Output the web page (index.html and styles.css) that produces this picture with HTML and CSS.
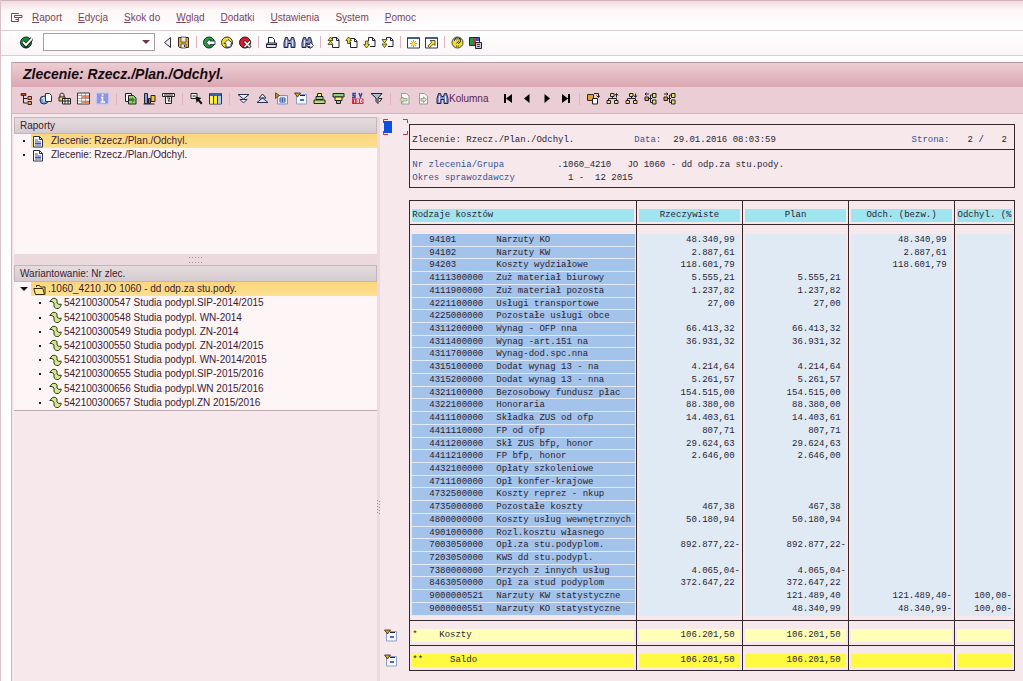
FILE: index.html
```html
<!DOCTYPE html>
<html lang="pl">
<head>
    <meta charset="UTF-8">
    <meta name="viewport" content="width=device-width, initial-scale=1.0">
    <title>Zlecenie: Rzecz./Plan./Odchyl.</title>
    <link rel="stylesheet" href="styles.css">
</head>
<body>
    <!-- icon sprite -->
    <svg class="sprite" aria-hidden="true">
        <symbol id="i-menu" viewBox="0 0 13 13"><path d="M8.500 2V1.500h-7v8H6M4.500 3.500H12v2H9M4.500 3.500v2H8.500v2H5.500M8.500 7.500v2H6" fill="none" stroke="#7a4358"/></symbol>
        <symbol id="i-ok" viewBox="0 0 13 13"><circle cx="6" cy="6.500" r="5.500" fill="#1c8a34" stroke="#123"/><path d="M3 6l3 3.500L12 2.500" fill="none" stroke="#111" stroke-width="3.500"/><path d="M3 6l3 3L12 2.500" fill="none" stroke="#fff" stroke-width="2"/></symbol>
        <symbol id="i-left" viewBox="0 0 9 13"><path d="M7.500 1.500v10L1.500 6.500z" fill="#f4e6ea" stroke="#334"/></symbol>
        <symbol id="i-save" viewBox="0 0 13 13"><path d="M1.500 1.500h10v10h-9l-1-1z" fill="#e0b23a" stroke="#3a2c1c"/><path d="M4 1h5v5H4zM4 8h5v4H4z" fill="#efe6f2" stroke="#3a2c1c" stroke-width=".7"/><path d="M7 9h1v2H7z" fill="#333"/></symbol>
        <symbol id="i-back" viewBox="0 0 13 13"><circle cx="6" cy="6.500" r="5.500" fill="#2c9a40" stroke="#132"/><path d="M3 6.500L7 3V5h5v3.500H7v1.800z" fill="#fff" stroke="#123" stroke-width=".8"/></symbol>
        <symbol id="i-exit" viewBox="0 0 13 13"><circle cx="6" cy="6.500" r="5.500" fill="#f5dd2c" stroke="#332"/><path d="M7 3.500L3 7.500h2v3.500h5V7.500h2z" fill="#fff" stroke="#223" stroke-width=".8"/></symbol>
        <symbol id="i-cancel" viewBox="0 0 13 13"><circle cx="6" cy="6.500" r="5.500" fill="#d41f30" stroke="#311"/><path d="M5 5l6.500 6.500M11.500 5L5 11.500" stroke="#222" stroke-width="3"/><path d="M5.500 5.500l5.500 5.500M11 5.500L5.500 11" stroke="#fff" stroke-width="1.600"/></symbol>
        <symbol id="i-print" viewBox="0 0 13 13"><path d="M3.500 7.500v-6h4l2 2v4" fill="#fff" stroke="#223"/><path d="M1.500 8l1-1h9l-.5 4.500H1.500z" fill="#e6e2e8" stroke="#223"/><path d="M1 8.500h11" stroke="#223"/></symbol>
        <symbol id="i-find" viewBox="0 0 13 13"><path d="M2.500 1.500h2l1 3h2l1-3h2l1.500 5v5h-4V7.500h-3v4h-4v-5z" fill="#8793c9" stroke="#1d2444"/><path d="M3.500 4v6M9.500 4v6" stroke="#dfe5ff"/></symbol>
        <symbol id="i-findnext" viewBox="0 0 13 13"><path d="M2.500 1.500h2l1 3h1l1-3h2l1.500 5v5h-4V7.500h-2v4h-4v-5z" fill="#8793c9" stroke="#1d2444"/><path d="M3.500 4v6" stroke="#dfe5ff"/><path d="M6 8.500h3V6l3.500 3.500L9 12.500v-2H6z" fill="#fff" stroke="#1d2444" stroke-width=".8"/></symbol>
        <symbol id="i-first" viewBox="0 0 13 13"><path d="M5.500 3.500V1.500H10L12 4v7.500H5.500V9" fill="#fff" stroke="#223"/><path d="M9.500 1.500V4.500H12" fill="none" stroke="#223"/><path d="M3.500 1L6 4.500H1zM3.500 5L6 8.500H1z" fill="#f2e02a" stroke="#332" stroke-width=".8"/></symbol>
        <symbol id="i-prev" viewBox="0 0 13 13"><path d="M5.500 3V2.500H9.500L12 5v6.500H5.500V6" fill="#fff" stroke="#223"/><path d="M9.500 2.500V5.500H12" fill="none" stroke="#223"/><path d="M3.500 1L6.500 4.500H5v3H2.500v-3H.8z" fill="#f2e02a" stroke="#332" stroke-width=".8"/></symbol>
        <symbol id="i-next" viewBox="0 0 13 13"><path d="M5.500 5V1.500H9.500L12 4v6.500H7" fill="#fff" stroke="#223"/><path d="M9.500 1.500V4.500H12" fill="none" stroke="#223"/><path d="M3.500 12L.8 8.500h1.700V5H5v3.500h1.500z" fill="#f2e02a" stroke="#332" stroke-width=".8"/></symbol>
        <symbol id="i-last" viewBox="0 0 13 13"><path d="M5.500 4V1.500H9.500L12 4v6.500H7" fill="#fff" stroke="#223"/><path d="M9.500 1.500V4.500H12" fill="none" stroke="#223"/><path d="M1 3.500h5L3.500 7zM1 8h5l-2.500 3.500z" fill="#f2e02a" stroke="#332" stroke-width=".8"/></symbol>
        <symbol id="i-session" viewBox="0 0 13 13"><path d="M.5 1.500h12v10.500H.5z" fill="#fff" stroke="#2b3a55"/><path d="M1 1h11v2H1z" fill="#425e91"/><path d="M6.500 4v7M3 7.500h7M4 5l5 5M9 5l-5 5" stroke="#b99d16"/><circle cx="6.500" cy="7.500" r="1.500" fill="#ffee39"/></symbol>
        <symbol id="i-shortcut" viewBox="0 0 13 13"><path d="M.5 1.500h12v10.500H.5z" fill="#fff" stroke="#2b3a55"/><path d="M1 1h11v2H1z" fill="#425e91"/><path d="M5 4.500h5v5L8.500 8l-4 3.500L3 10l3.800-3.800z" fill="#f7e532" stroke="#332" stroke-width=".8"/></symbol>
        <symbol id="i-help" viewBox="0 0 13 13"><circle cx="6.500" cy="6.500" r="5.500" fill="#f3de2d" stroke="#443"/><path d="M4 5c0-3.500 5-3 5-.5C9 6.500 6.500 6 6.500 8M6.500 9.200v1.500" fill="none" stroke="#222" stroke-width="2.200"/><path d="M4.300 5c0-3 4.500-2.500 4.500-.5C8.800 6.300 6.500 6 6.500 8M6.500 9.300v1.200" fill="none" stroke="#fff"/></symbol>
        <symbol id="i-layout" viewBox="0 0 13 13"><path d="M.5 1.500h10v8H.5z" fill="#fff" stroke="#223"/><path d="M1 2h3v7H1z" fill="#1c9c46"/><path d="M4 2h3v7H4z" fill="#d52c42"/><path d="M7 2h3v3H7z" fill="#3c58b8"/><path d="M6.500 6.500h6v6h-6z" fill="#c9ccd8" stroke="#223"/><path d="M8 8.500h3M8 10.500h3" stroke="#334"/></symbol>
        <symbol id="i-tree" viewBox="0 0 13 13"><path d="M3.500 3v8h4M3.500 6.500h4" fill="none" stroke="#222"/><path d="M1 1.500h5v2H1z" fill="#b43b27" stroke="#311" stroke-width=".7"/><path d="M8 4.500h3.500v3H8zM8 9.500h3.500v3H8z" fill="#e9a55e" stroke="#422"/></symbol>
        <symbol id="i-world" viewBox="0 0 13 13"><circle cx="5" cy="8" r="4" fill="#6da3dc" stroke="#1d355f"/><path d="M6.500 1.500h4l2 2v6h-6z" fill="#fff" stroke="#334"/><path d="M3 7l2-2v5" fill="none" stroke="#fff"/></symbol>
        <symbol id="i-lock" viewBox="0 0 13 13"><path d="M2 5V3c0-2.500 4-2.500 4 0v2" fill="none" stroke="#222"/><path d="M1 5h6v4H1z" fill="#f0d840" stroke="#222"/><path d="M4.500 6.500h8v5.500h-8zM4.500 9h8M7 6.500V12M10 6.500V12" fill="#fff" stroke="#222"/></symbol>
        <symbol id="i-grid" viewBox="0 0 13 13"><path d="M.5 1h12v11H.5z" fill="#fff" stroke="#3a3640"/><path d="M5 4h7v2.500H5zM5 9h7v2.500H5z" fill="#e98a5c"/><path d="M1 3.500h11M1 6.500h11M1 9h11M4.500 1v11M8.500 1v11" stroke="#8b8792" stroke-width=".7"/></symbol>
        <symbol id="i-info" viewBox="0 0 13 13"><path d="M.5 1h12v11H.5z" fill="#8d93e6" stroke="#c3c5f2"/><path d="M5 5.500h1.500v4.500M4.500 10h4.500M5.700 3h1.800" fill="none" stroke="#fff" stroke-width="1.500"/></symbol>
        <symbol id="i-export" viewBox="0 0 13 13"><path d="M1.500 1.500h6v8h-6z" fill="#fff" stroke="#222"/><path d="M4.500 3.500h5l2.500 2.500v6H4.500z" fill="#9bd36d" stroke="#222"/><path d="M5 6.500h3V5l3 3-3 3V9H5z" fill="#33842c"/></symbol>
        <symbol id="i-chart" viewBox="0 0 13 13"><path d="M1.500 1.500h3v10h-3z" fill="#8798e6" stroke="#222"/><path d="M5.500 6.500h2v5h-2z" fill="#d95d35" stroke="#222"/><path d="M8 3.500h4v6H8z" fill="#f2c43e" stroke="#222"/><path d="M.5 12h11" stroke="#222"/></symbol>
        <symbol id="i-cols" viewBox="0 0 13 13"><path d="M.5 1.500h12v3H.5z" fill="#fff" stroke="#222"/><path d="M3.500 4.500h6v7h-6z" fill="#f5f1f5" stroke="#222"/><path d="M5 6h3L6 9h2.500M2 3h9" fill="none" stroke="#222"/></symbol>
        <symbol id="i-select" viewBox="0 0 13 13"><path d="M1 1.500h6v5H1z" fill="#fff" stroke="#222"/><path d="M2.500 3h3v2h-3z" fill="#888"/><path d="M5.500 4.500l6 1.500-2 1.500 3 3.500-1.500 1.500-3-3.500-1.500 2z" fill="#111"/></symbol>
        <symbol id="i-table" viewBox="0 0 13 13"><path d="M.5 1.500h12v10.500H.5z" fill="#fff" stroke="#26324e"/><path d="M1 1h11v3H1z" fill="#3260b8"/><path d="M1 4h3v7.500H1z" fill="#fff266"/><path d="M4.500 4v8M8.500 4v8" stroke="#26324e"/><path d="M5 4h3v7.500H5z" fill="#ffe82c"/><path d="M9 4h3v7.500H9z" fill="#a8cdee"/></symbol>
        <symbol id="i-expand" viewBox="0 0 13 13"><path d="M1 2.500h11L6.500 7zM3 7.500h7L6.500 11z" fill="#e9eefb" stroke="#26324e"/></symbol>
        <symbol id="i-collapse" viewBox="0 0 13 13"><path d="M3 6l3.500-4L10 6zM1 10.500l5.500-4.500 5.500 4.500z" fill="#dce5fa" stroke="#26324e"/></symbol>
        <symbol id="i-drill" viewBox="0 0 13 13"><path d="M2.500 3.500h10v8.500h-10z" fill="#e3ecfb" stroke="#7f93bd"/><path d="M5 6h5v4H5z" fill="#fff" stroke="#3b59a8"/><path d="M7.500 6v4M5 8h5" stroke="#3b59a8"/><path d="M.5.800L4.500 3.500.5 6.500z" fill="#c98c1c" stroke="#321" stroke-width=".7"/></symbol>
        <symbol id="i-node" viewBox="0 0 13 13"><path d="M2.500 2.500h10V12h-10z" fill="#f6f8ff" stroke="#8d9fc8"/><path d="M6 3.500h5" stroke="#222"/><path d="M6 8h4" stroke="#1a3ca2" stroke-width="1.500"/><path d="M.5 1h6L3.500 5z" fill="#d8a41f" stroke="#321" stroke-width=".8"/></symbol>
        <symbol id="i-asc" viewBox="0 0 13 13"><path d="M4.500 1.500h4v3h-4z" fill="#fff266" stroke="#222"/><path d="M3 4.500h7v3H3z" fill="#8bd080" stroke="#222"/><path d="M1 8h11v3.500H1z" fill="#bfd878" stroke="#222"/></symbol>
        <symbol id="i-desc" viewBox="0 0 13 13"><path d="M1 1.500h11V5H1z" fill="#8bd080" stroke="#222"/><path d="M3 5h7v3.500H3z" fill="#fff266" stroke="#222"/><path d="M4.500 8.500h4v3h-4z" fill="#8bd080" stroke="#222"/></symbol>
        <symbol id="i-xxl" viewBox="0 0 13 13"><path d="M5 1.500H2v2h2v2H1M8 1l1.500 4L11 1" fill="none" stroke="#2343b4" stroke-width="1.400"/><path d="M1 6.500h11.500V12H1z" fill="#d62c43"/><path d="M3.500 7.500v3M6 7.500h1.500v3H6zM9.500 7.500H11v3H9.500z" fill="none" stroke="#fff" stroke-width=".8"/></symbol>
        <symbol id="i-filter" viewBox="0 0 13 13"><path d="M1 1.500h11L8 6v5.500l-2-2V6z" fill="#a9bcd0" stroke="#222"/><path d="M9 6.500h3L9.500 10" fill="none" stroke="#222"/></symbol>
        <symbol id="i-docl" viewBox="0 0 13 13"><path d="M3.500 1.500h5L11 4v8H3.500z" fill="#fbf7f8" stroke="#9b9a93"/><path d="M2 7.500L5 5v1.500h4v2.500H5v1.500z" fill="#d5e2ba" stroke="#8b9277" stroke-width=".8"/></symbol>
        <symbol id="i-docr" viewBox="0 0 13 13"><path d="M2.500 1.500h5L10.500 4v8h-8z" fill="#fbf7f8" stroke="#9b9a93"/><path d="M9.500 7.500L6.500 5v1.500H4v2.500h2.500v1.500z" fill="#d5e2ba" stroke="#8b9277" stroke-width=".8"/></symbol>
        <symbol id="n-first" viewBox="0 0 13 13"><path d="M2 2h2v9H2zM10 2v9L4 6.500z"/></symbol>
        <symbol id="n-prev" viewBox="0 0 13 13"><path d="M8.500 2v9L3 6.500z"/></symbol>
        <symbol id="n-next" viewBox="0 0 13 13"><path d="M4.500 2v9L10 6.500z"/></symbol>
        <symbol id="n-last" viewBox="0 0 13 13"><path d="M9 2h2v9H9zM3 2v9l6-4.500z"/></symbol>
        <symbol id="i-swap" viewBox="0 0 13 13"><path d="M.5 2.500h6v6h-6z" fill="#e6a028" stroke="#3a2a12"/><path d="M5.500 6.500h5v5.500h-5z" fill="#fff" stroke="#222"/><path d="M7 1.500h4.500V5M9.500 3.500l2 2 1.500-2" fill="none" stroke="#222"/></symbol>
        <symbol id="i-hier1" viewBox="0 0 13 13"><path d="M2.500 9V6.500h8V9M6.500 4v2.500" fill="none" stroke="#222"/><path d="M4.500 1.500H8v3H4.500zM1 8.500h3.500v3H1zM8.500 8.500H12v3H8.500z" fill="#f0e288" stroke="#222"/><path d="M10.500 5.500V2M9 3.500l1.500-2 1.500 2" fill="none" stroke="#222"/></symbol>
        <symbol id="i-hier2" viewBox="0 0 13 13"><path d="M2.500 9V6.500h8V9M6.500 4v2.500" fill="none" stroke="#222"/><path d="M4.500 1.500H8v3H4.500zM1 8.500h3.500v3H1zM8.500 8.500H12v3H8.500z" fill="#f0e288" stroke="#222"/><path d="M10.500 1.500V5M9 3.500l1.500 2 1.500-2" fill="none" stroke="#222"/></symbol>
        <symbol id="i-hier3" viewBox="0 0 13 13"><path d="M4 6.500h4M6.500 3v7.500H8M6.500 3H8" fill="none" stroke="#222"/><path d="M1 5h3.500v3.500H1z" fill="#e6a028" stroke="#222"/><path d="M8.500 1.500H12v4H8.500zM8.500 8H12v4H8.500z" fill="#d8e56d" stroke="#222"/><path d="M5 2H1M2.500.800L1 2l1.500 1.500" fill="none" stroke="#222"/></symbol>
        <symbol id="i-hier4" viewBox="0 0 13 13"><path d="M4 6.500h4M6.500 3v7.500H8M6.500 3H8" fill="none" stroke="#222"/><path d="M1 5h3.500v3.500H1z" fill="#e6a028" stroke="#222"/><path d="M8.500 1.500H12v4H8.500zM8.500 8H12v4H8.500z" fill="#d8e56d" stroke="#222"/><path d="M1 2h4M3.500.800L5 2 3.500 3.500" fill="none" stroke="#222"/></symbol>
        <symbol id="i-doc" viewBox="0 0 13 13"><path d="M.5 1.500h6L9.500 4.500v7.500h-9z" fill="#fff" stroke="#26324e"/><path d="M6.500 1.500v3h3" fill="none" stroke="#26324e"/><path d="M2 5h3M2 7h6M2 8.500h6M2 10h6" stroke="#3a50b0"/></symbol>
        <symbol id="i-folder" viewBox="0 0 13 13"><path d="M3.500 4V2.500h3l1 1.500h4.500v7.500" fill="#ffe58a" stroke="#332a12"/><path d="M.8 5.500h9l1.700 6H2.500z" fill="#ffe58a" stroke="#332a12"/></symbol>
        <symbol id="i-var" viewBox="0 0 13 13"><path d="M.8 4.500L3.500 1.500c2-.5 4 0 4.500 1.500v3l2 1.500 2.200-.5c0 2-1.500 4-3 4.500-2 .3-4-.5-4.200-2.500V6L3 4.500z" fill="#d5e68c" stroke="#2d3a1c"/></symbol>
    </svg>

    <nav class="menu-bar">
        <svg class="icon"><use href="#i-menu"/></svg>
        <button><u>R</u>aport</button>
        <button><u>E</u>dycja</button>
        <button><u>S</u>kok do</button>
        <button><u>W</u>gląd</button>
        <button><u>D</u>odatki</button>
        <button><u>U</u>stawienia</button>
        <button>S<u>y</u>stem</button>
        <button><u>P</u>omoc</button>
    </nav>

    <div class="system-bar">
        <button class="tool" aria-label="Enter"><svg class="icon"><use href="#i-ok"/></svg></button>
        <div class="command">
            <input type="text" aria-label="Polecenie">
            <button class="drop" aria-label="Lista poleceń"></button>
        </div>
        <button class="tool" aria-label="Zwiń"><svg class="icon narrow"><use href="#i-left"/></svg></button>
        <button class="tool" aria-label="Zapisz"><svg class="icon"><use href="#i-save"/></svg></button>
        <span class="sep"></span>
        <button class="tool" aria-label="Wstecz"><svg class="icon"><use href="#i-back"/></svg></button>
        <button class="tool" aria-label="Wyjście"><svg class="icon"><use href="#i-exit"/></svg></button>
        <button class="tool" aria-label="Anuluj"><svg class="icon"><use href="#i-cancel"/></svg></button>
        <span class="sep"></span>
        <button class="tool" aria-label="Drukuj"><svg class="icon"><use href="#i-print"/></svg></button>
        <button class="tool" aria-label="Szukaj"><svg class="icon"><use href="#i-find"/></svg></button>
        <button class="tool" aria-label="Szukaj dalej"><svg class="icon"><use href="#i-findnext"/></svg></button>
        <span class="sep"></span>
        <button class="tool" aria-label="Pierwsza strona"><svg class="icon"><use href="#i-first"/></svg></button>
        <button class="tool" aria-label="Poprzednia strona"><svg class="icon"><use href="#i-prev"/></svg></button>
        <button class="tool" aria-label="Następna strona"><svg class="icon"><use href="#i-next"/></svg></button>
        <button class="tool" aria-label="Ostatnia strona"><svg class="icon"><use href="#i-last"/></svg></button>
        <span class="sep"></span>
        <button class="tool" aria-label="Nowy tryb"><svg class="icon"><use href="#i-session"/></svg></button>
        <button class="tool" aria-label="Skrót"><svg class="icon"><use href="#i-shortcut"/></svg></button>
        <span class="sep"></span>
        <button class="tool" aria-label="Pomoc"><svg class="icon"><use href="#i-help"/></svg></button>
        <button class="tool" aria-label="Układ"><svg class="icon"><use href="#i-layout"/></svg></button>
    </div>

    <main class="window">
        <h1>Zlecenie: Rzecz./Plan./Odchyl.</h1>

        <div class="app-bar">
            <button class="tool" aria-label="Hierarchia"><svg class="icon"><use href="#i-tree"/></svg></button>
            <button class="tool" aria-label="Waluta"><svg class="icon"><use href="#i-world"/></svg></button>
            <button class="tool" aria-label="Blokada"><svg class="icon"><use href="#i-lock"/></svg></button>
            <button class="tool" aria-label="Siatka"><svg class="icon"><use href="#i-grid"/></svg></button>
            <button class="tool" aria-label="Informacja"><svg class="icon"><use href="#i-info"/></svg></button>
            <span class="sep"></span>
            <button class="tool" aria-label="Eksport"><svg class="icon"><use href="#i-export"/></svg></button>
            <button class="tool" aria-label="Wykres"><svg class="icon"><use href="#i-chart"/></svg></button>
            <button class="tool" aria-label="Format"><svg class="icon"><use href="#i-cols"/></svg></button>
            <span class="sep"></span>
            <button class="tool" aria-label="Wybierz"><svg class="icon"><use href="#i-select"/></svg></button>
            <button class="tool" aria-label="Kolumny"><svg class="icon"><use href="#i-table"/></svg></button>
            <span class="sep"></span>
            <button class="tool" aria-label="Rozwiń"><svg class="icon"><use href="#i-expand"/></svg></button>
            <button class="tool" aria-label="Zwiń"><svg class="icon"><use href="#i-collapse"/></svg></button>
            <button class="tool" aria-label="Szczegóły"><svg class="icon"><use href="#i-drill"/></svg></button>
            <button class="tool" aria-label="Węzeł"><svg class="icon"><use href="#i-node"/></svg></button>
            <button class="tool" aria-label="Sortuj rosnąco"><svg class="icon"><use href="#i-asc"/></svg></button>
            <button class="tool" aria-label="Sortuj malejąco"><svg class="icon"><use href="#i-desc"/></svg></button>
            <button class="tool" aria-label="Wyjątki"><svg class="icon"><use href="#i-xxl"/></svg></button>
            <button class="tool" aria-label="Filtr"><svg class="icon"><use href="#i-filter"/></svg></button>
            <span class="sep"></span>
            <button class="tool" aria-label="Poprzedni"><svg class="icon"><use href="#i-docl"/></svg></button>
            <button class="tool" aria-label="Następny"><svg class="icon"><use href="#i-docr"/></svg></button>
            <button class="tool labelled"><svg class="icon"><use href="#i-find"/></svg>Kolumna</button>
            <button class="tool nav-first" aria-label="Pierwsza kolumna"><svg class="icon"><use href="#n-first"/></svg></button>
            <button class="tool" aria-label="Kolumna w lewo"><svg class="icon"><use href="#n-prev"/></svg></button>
            <button class="tool" aria-label="Kolumna w prawo"><svg class="icon"><use href="#n-next"/></svg></button>
            <button class="tool" aria-label="Ostatnia kolumna"><svg class="icon"><use href="#n-last"/></svg></button>
            <span class="sep"></span>
            <button class="tool" aria-label="Zamień"><svg class="icon"><use href="#i-swap"/></svg></button>
            <button class="tool" aria-label="Poziom w górę"><svg class="icon"><use href="#i-hier1"/></svg></button>
            <button class="tool" aria-label="Poziom w dół"><svg class="icon"><use href="#i-hier2"/></svg></button>
            <button class="tool" aria-label="Węzeł w lewo"><svg class="icon"><use href="#i-hier3"/></svg></button>
            <button class="tool" aria-label="Węzeł w prawo"><svg class="icon"><use href="#i-hier4"/></svg></button>
        </div>

        <div class="panes">
            <aside class="side">
                <section class="reports">
                    <h2>Raporty</h2>
                    <ul class="list">
                        <li><i class="dot"></i><button class="selected"><svg class="icon"><use href="#i-doc"/></svg><span>Zlecenie: Rzecz./Plan./Odchyl.</span></button></li>
                        <li><i class="dot"></i><button><svg class="icon"><use href="#i-doc"/></svg><span>Zlecenie: Rzecz./Plan./Odchyl.</span></button></li>
                    </ul>
                </section>
                <div class="split-row"><svg width="16" height="8"><path d="M1 1.500h15M1 6.500h15" stroke="#a58e97" stroke-dasharray="1 2"/></svg></div>
                <section class="variants">
                    <h2>Wariantowanie: Nr zlec.</h2>
                    <ul class="list tree">
                        <li><i class="arrow"></i><button class="selected"><svg class="icon"><use href="#i-folder"/></svg>.1060_4210 JO 1060 - dd odp.za stu.pody.</button></li>
                        <li class="child"><i class="dot"></i><button><svg class="icon"><use href="#i-var"/></svg>542100300547 Studia podypl.SIP-2014/2015</button></li>
                        <li class="child"><i class="dot"></i><button><svg class="icon"><use href="#i-var"/></svg>542100300548 Studia podypl. WN-2014</button></li>
                        <li class="child"><i class="dot"></i><button><svg class="icon"><use href="#i-var"/></svg>542100300549 Studia podypl. ZN-2014</button></li>
                        <li class="child"><i class="dot"></i><button><svg class="icon"><use href="#i-var"/></svg>542100300550 Studia podypl. ZN-2014/2015</button></li>
                        <li class="child"><i class="dot"></i><button><svg class="icon"><use href="#i-var"/></svg>542100300551 Studia podypl. WN-2014/2015</button></li>
                        <li class="child"><i class="dot"></i><button><svg class="icon"><use href="#i-var"/></svg>542100300655 Studia podypl.SIP-2015/2016</button></li>
                        <li class="child"><i class="dot"></i><button><svg class="icon"><use href="#i-var"/></svg>542100300656 Studia podypl.WN 2015/2016</button></li>
                        <li class="child"><i class="dot"></i><button><svg class="icon"><use href="#i-var"/></svg>542100300657 Studia podypl.ZN 2015/2016</button></li>
                    </ul>
                </section>
            </aside>

            <div class="split-col"><svg width="3" height="16"><path d="M.5 1v15M2.500 2v14" stroke="#a58e97" stroke-dasharray="1 2"/></svg></div>

            <div class="report">
                <div class="head-row">
                    <div class="gutter"><svg width="26" height="16"><path d="M1 2h8v12H1z" fill="#0b50e0"/><path d="M5 .5H.5V4M.5 12v3.500H5M20 .5h4.500V4M24.500 12v3.500H20" fill="none" stroke="#c93345"/></svg></div>
                    <header class="head">
                        <div class="head-title">
                            <span class="name">Zlecenie: Rzecz./Plan./Odchyl.</span>
                            <span class="label date-label">Data:</span>
                            <span class="date">29.01.2016 08:03:59</span>
                            <span class="label page-label">Strona:</span>
                            <span class="page">2 /</span>
                            <span>2</span>
                        </div>
                        <dl class="head-info">
                            <dt>Nr zlecenia/Grupa</dt><dd>.1060_4210   JO 1060 - dd odp.za stu.pody.</dd>
                            <dt>Okres sprawozdawczy</dt><dd>  1 -  12 2015</dd>
                        </dl>
                    </header>
                </div>

                <table class="costs">
                    <colgroup>
                        <col class="c-gutter"><col class="c-name"><col class="c-val"><col class="c-val"><col class="c-val"><col class="c-pct">
                    </colgroup>
                    <thead>
                        <tr><td></td><th>Rodzaje kosztów</th><th>Rzeczywiste</th><th>Plan</th><th>Odch. (bezw.)</th><th>Odchyl. (%</th></tr>
                    </thead>
                    <tbody>
                        <tr class="pad"><td></td><td></td><td></td><td></td><td></td><td></td></tr>
                        <tr><td></td><th><b>94101</b>Narzuty KO</th><td>48.340,99 </td><td></td><td>48.340,99 </td><td></td></tr>
                        <tr><td></td><th><b>94102</b>Narzuty KW</th><td>2.887,61 </td><td></td><td>2.887,61 </td><td></td></tr>
                        <tr><td></td><th><b>94203</b>Koszty wydziałowe</th><td>118.601,79 </td><td></td><td>118.601,79 </td><td></td></tr>
                        <tr><td></td><th><b>4111300000</b>Zuż materiał biurowy</th><td>5.555,21 </td><td>5.555,21 </td><td></td><td></td></tr>
                        <tr><td></td><th><b>4111900000</b>Zuż materiał pozosta</th><td>1.237,82 </td><td>1.237,82 </td><td></td><td></td></tr>
                        <tr><td></td><th><b>4221100000</b>Usługi transportowe</th><td>27,00 </td><td>27,00 </td><td></td><td></td></tr>
                        <tr><td></td><th><b>4225000000</b>Pozostałe usługi obce</th><td></td><td></td><td></td><td></td></tr>
                        <tr><td></td><th><b>4311200000</b>Wynag - OFP nna</th><td>66.413,32 </td><td>66.413,32 </td><td></td><td></td></tr>
                        <tr><td></td><th><b>4311400000</b>Wynag -art.151 na</th><td>36.931,32 </td><td>36.931,32 </td><td></td><td></td></tr>
                        <tr><td></td><th><b>4311700000</b>Wynag-dod.spc.nna</th><td></td><td></td><td></td><td></td></tr>
                        <tr><td></td><th><b>4315100000</b>Dodat wynag 13 - na</th><td>4.214,64 </td><td>4.214,64 </td><td></td><td></td></tr>
                        <tr><td></td><th><b>4315200000</b>Dodat wynag 13 - nna</th><td>5.261,57 </td><td>5.261,57 </td><td></td><td></td></tr>
                        <tr><td></td><th><b>4321100000</b>Bezosobowy fundusz płac</th><td>154.515,00 </td><td>154.515,00 </td><td></td><td></td></tr>
                        <tr><td></td><th><b>4322100000</b>Honoraria</th><td>88.380,00 </td><td>88.380,00 </td><td></td><td></td></tr>
                        <tr><td></td><th><b>4411100000</b>Składka ZUS od ofp</th><td>14.403,61 </td><td>14.403,61 </td><td></td><td></td></tr>
                        <tr><td></td><th><b>4411110000</b>FP od ofp</th><td>807,71 </td><td>807,71 </td><td></td><td></td></tr>
                        <tr><td></td><th><b>4411200000</b>Skł ZUS bfp, honor</th><td>29.624,63 </td><td>29.624,63 </td><td></td><td></td></tr>
                        <tr><td></td><th><b>4411210000</b>FP bfp, honor</th><td>2.646,00 </td><td>2.646,00 </td><td></td><td></td></tr>
                        <tr><td></td><th><b>4432100000</b>Opłaty szkoleniowe</th><td></td><td></td><td></td><td></td></tr>
                        <tr><td></td><th><b>4711100000</b>Opł konfer-krajowe</th><td></td><td></td><td></td><td></td></tr>
                        <tr><td></td><th><b>4732500000</b>Koszty reprez - nkup</th><td></td><td></td><td></td><td></td></tr>
                        <tr><td></td><th><b>4735000000</b>Pozostałe koszty</th><td>467,38 </td><td>467,38 </td><td></td><td></td></tr>
                        <tr><td></td><th><b>4800000000</b>Koszty usług wewnętrznych</th><td>50.180,94 </td><td>50.180,94 </td><td></td><td></td></tr>
                        <tr><td></td><th><b>4901000000</b>Rozl.kosztu własnego</th><td></td><td></td><td></td><td></td></tr>
                        <tr><td></td><th><b>7003050000</b>Opł.za stu.podyplom.</th><td>892.877,22-</td><td>892.877,22-</td><td></td><td></td></tr>
                        <tr><td></td><th><b>7203050000</b>KWS dd stu.podypl.</th><td></td><td></td><td></td><td></td></tr>
                        <tr><td></td><th><b>7380000000</b>Przych z innych usług</th><td>4.065,04-</td><td>4.065,04-</td><td></td><td></td></tr>
                        <tr><td></td><th><b>8463050000</b>Opł za stud podyplom</th><td>372.647,22 </td><td>372.647,22 </td><td></td><td></td></tr>
                        <tr><td></td><th><b>9000000521</b>Narzuty KW statystyczne</th><td></td><td>121.489,40 </td><td>121.489,40-</td><td>100,00-</td></tr>
                        <tr><td></td><th><b>9000000551</b>Narzuty KO statystyczne</th><td></td><td>48.340,99 </td><td>48.340,99-</td><td>100,00-</td></tr>
                        <tr class="pad end"><td></td><td></td><td></td><td></td><td></td><td></td></tr>
                    </tbody>
                    <tfoot>
                        <tr class="sum"><td><svg class="icon"><use href="#i-node"/></svg></td><th>*    Koszty</th><td>106.201,50 </td><td>106.201,50 </td><td></td><td></td></tr>
                        <tr class="total"><td><svg class="icon"><use href="#i-node"/></svg></td><th>**     Saldo</th><td>106.201,50 </td><td>106.201,50 </td><td></td><td></td></tr>
                    </tfoot>
                </table>
            </div>
        </div>
    </main>
</body>
</html>
```
FILE: styles.css
```css
* {
    box-sizing: border-box;
}

body {
    display: flex;
    flex-direction: column;
    min-height: 100vh;
    margin: 0;
    border-left: 1px solid #d9c3c9;
    background: #fff;
    color: #3c1a34;
    font: 10px/14px "Liberation Sans", Arial, sans-serif;
}

button {
    padding: 0;
    border: 0;
    background: none;
    color: inherit;
    font: inherit;
    cursor: pointer;
}

.sprite {
    position: absolute;
    width: 0;
    height: 0;
}

.icon {
    display: block;
    flex: none;
    width: 13px;
    height: 13px;
}

.icon.narrow {
    width: 9px;
}

/* menu and system toolbar */
.menu-bar {
    display: flex;
    align-items: center;
    gap: 16px;
    height: 31px;
    padding: 5px 0 0 9px;
    border-top: 1px solid #cfb4bb;
    border-bottom: 1px solid #dccdd1;
    background: linear-gradient(#f3dadf, #fdf6f7 9px, #fff);
    color: #7a4358;
}

.menu-bar .icon {
    margin-right: -7px;
}

.system-bar {
    display: flex;
    align-items: center;
    gap: 5px;
    height: 25px;
    padding: 0 0 2px 19px;
    border-bottom: 1px solid #dccdd1;
    background: linear-gradient(#fff, #fcf5f7);
}

.command {
    display: flex;
    width: 112px;
    height: 18px;
    margin: 0 3px 0 5px;
    border: 1px solid #a99da1;
    background: #fff;
}

.command input {
    flex: 1;
    min-width: 0;
    padding: 0 3px;
    border: 0;
    outline: 0;
    font: inherit;
}

.drop {
    width: 16px;
}

.drop::before,
.arrow::before {
    content: "";
    display: block;
    width: 0;
    margin: 0 auto;
    border: 4px solid transparent;
    border-top-color: #7a2f45;
    border-bottom: 0;
}

.sep {
    width: 1px;
    height: 12px;
    margin: 0 1px;
    background: #e0b4bd;
}

/* report window */
.window {
    display: flex;
    flex: 1;
    flex-direction: column;
    margin: 6px 0 0 10px;
    border-left: 1px solid #d3b4bb;
    background: #f7e8eb;
}

h1 {
    height: 25px;
    margin: 0;
    padding-left: 11px;
    border-top: 1px solid #b9989f;
    background: linear-gradient(#edcdd3, #daa7b2);
    color: #140a10;
    font: italic bold 14px/22px "Liberation Sans", Arial, sans-serif;
}

.app-bar {
    display: flex;
    align-items: center;
    gap: 6px;
    height: 27px;
    padding: 0 0 3px 8px;
    border-bottom: 1px solid #d3b4bb;
    background: #ebced5;
}

.labelled {
    display: flex;
    align-items: center;
    color: #5c2350;
}

.nav-first {
    margin-left: 8px;
}

.panes {
    display: flex;
    flex: 1;
    padding: 3px 0 0 2px;
}

.side {
    width: 36%;
    max-width: 364px;
    flex: none;
}

.side h2 {
    height: 17px;
    margin: 0;
    padding-left: 5px;
    border: 1px solid #c4b5ba;
    background: linear-gradient(#e5dcdf, #d5cbce);
    font: 10px/15px "Liberation Sans", Arial, sans-serif;
}

.reports {
    height: 137px;
    background: #fef5f6;
}

.list {
    margin: 0;
    padding: 0;
    list-style: none;
}

.list li {
    display: flex;
    align-items: center;
}

.list button {
    display: flex;
    flex: 1;
    align-items: center;
    gap: 2px;
    padding-left: 2px;
    text-align: left;
    white-space: nowrap;
}

.list button.selected {
    background: linear-gradient(#fbd67c, #fde092);
}

.reports button {
    gap: 5px;
}

.dot,
.arrow {
    flex: none;
    width: 17px;
}

.dot::before {
    content: "";
    display: block;
    width: 2px;
    height: 2px;
    margin-left: 9px;
    background: #2a1a26;
}

.arrow::before {
    margin-left: 6px;
    border-top-color: #111;
}

.child {
    padding-left: 16px;
}

.tree {
    display: grid;
    grid-auto-rows: 1fr;
    min-height: 129px;
    border-bottom: 1px solid #bcaab0;
    background: #fef5f6;
}

.split-row {
    display: flex;
    align-items: center;
    justify-content: center;
    height: 11px;
    background: #ecd9de;
}

.split-col {
    display: flex;
    align-items: center;
    width: 3px;
    padding-top: 216px;
    background: #ecdade;
}

/* list output */
.report {
    flex: 1;
    min-width: 0;
    padding: 2px 8px 0 2px;
    color: #2b1d33;
    font: 9px/13px "Liberation Mono", "Courier New", monospace;
}

.head-row {
    display: flex;
    margin-bottom: 12px;
}

.gutter {
    flex: none;
    width: 27px;
    padding-left: 1px;
}

.head {
    flex: 1;
    margin-top: 5px;
    border: 1px solid #33272c;
}

.head-title {
    display: flex;
    padding: 9px 7px 2px 2px;
    border-bottom: 1px solid #33272c;
}

.head .name {
    width: 222px;
}

.head .date-label {
    width: 39px;
}

.head .date {
    flex: 1;
}

.head .page-label {
    width: 56px;
}

.head .page {
    width: 34px;
}

.label,
.head-info dt {
    color: #31539b;
}

.head-info {
    display: grid;
    grid-template-columns: 145px 1fr;
    margin: 0;
    padding: 9px 2px 2px;
}

.head-info dd {
    margin: 0;
    white-space: pre;
}

.costs {
    width: 100%;
    height: 471px;
    border-spacing: 0;
    table-layout: fixed;
}

/* the name column takes what is left */
.c-gutter { width: 28px; }
.c-val { width: 106px; }
.c-pct { width: 60px; }

.costs th,
.costs td {
    padding: 0 2px;
    border-right: 1px solid #33272c;
    background: linear-gradient(#dfeaf4, #dfeaf4) center top / calc(100% - 4px) 100% no-repeat;
    font-weight: normal;
    text-align: right;
    vertical-align: top;
    white-space: pre;
}

.costs th {
    text-align: left;
}

.costs b {
    display: inline-block;
    width: 84px;
    padding-left: 17px;
    font-weight: normal;
}

.costs tbody th {
    background: linear-gradient(#a3c3ea, #a3c3ea) center top / calc(100% - 3px) calc(100% - 1px) no-repeat #e3eaf5;
    line-height: 12px;
}

.costs tbody td {
    line-height: 12px;
}

.costs thead tr,
.costs tfoot tr {
    height: 25px;
}

.costs thead th,
.costs tfoot th,
.costs tfoot td {
    padding-top: 8px;
    border-bottom: 1px solid #33272c;
    background: linear-gradient(#9fe5f0, #9fe5f0) center 8px / calc(100% - 4px) 13px no-repeat;
}

.costs thead th {
    border-top: 1px solid #33272c;
    text-align: center;
}

.costs thead th:nth-child(2) {
    text-align: left;
}

.costs .sum th,
.costs .sum td {
    background-image: linear-gradient(#ffffb8, #ffffb8);
}

.costs .total th,
.costs .total td {
    background-image: linear-gradient(#fff941, #fff941);
}

.costs .pad td {
    height: 9px;
    background: none;
    line-height: 0;
}

.costs .pad.end td {
    height: 5px;
    border-bottom: 1px solid #33272c;
}

/* the gutter cell carries the left rule of the list */
.costs tr td:first-child,
.costs .pad.end td:first-child {
    padding-left: 2px;
    border-bottom: 0;
    background: none;
}
```
